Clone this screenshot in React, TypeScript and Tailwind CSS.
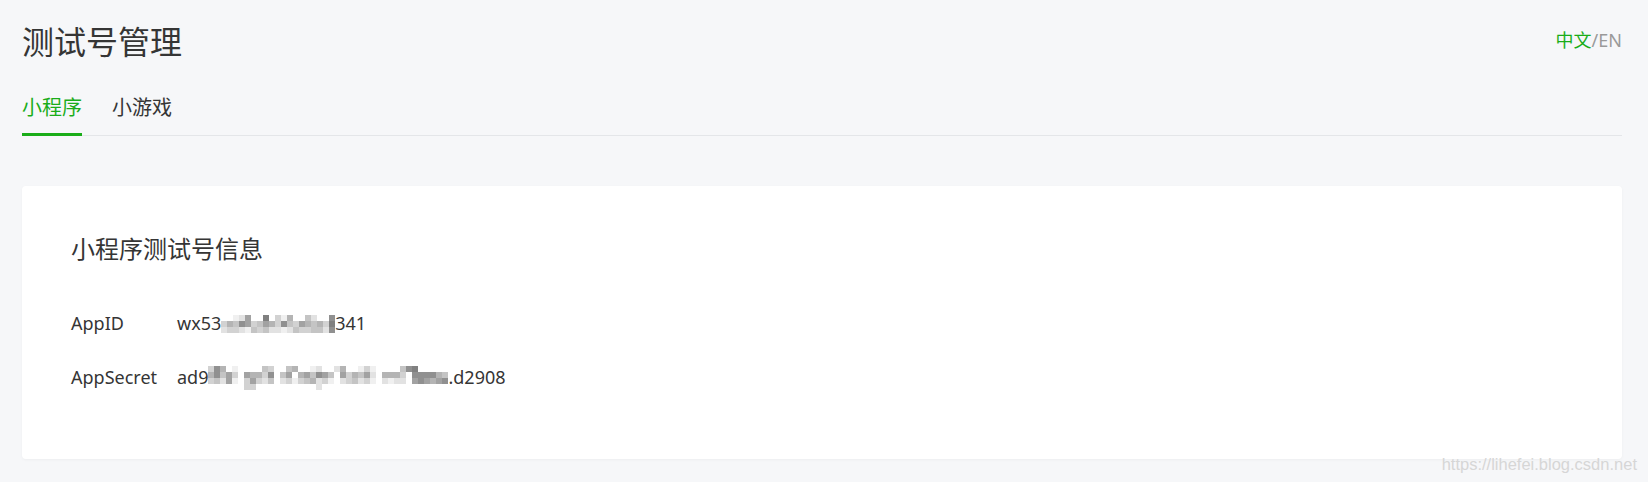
import React from "react";

const shades: Record<string, string> = {
  "1": "#f0f0f0",
  "2": "#e2e2e2",
  "3": "#d2d2d2",
  "4": "#c4c4c4",
  "5": "#b4b4b4",
  "6": "#a2a2a2",
  "7": "#909090",
  "8": "#808080",
  "9": "#707070",
};

// pixelated blur over the hidden part of the keys
function Mosaic({ rows }: { rows: string[] }) {
  return (
    <span className="inline-flex flex-col mt-[2px]">
      {rows.map((row, i) => (
        <span key={i} className="flex">
          {row.split("").map((c, j) => (
            <span
              key={j}
              className="block w-[6px] h-[6px]"
              style={{ backgroundColor: shades[c] ?? "transparent" }}
            />
          ))}
        </span>
      ))}
    </span>
  );
}

const appIdMosaic = [
  "0012600803150042007",
  "3547634653743654538",
  "2332143422124334427",
];

const secretMosaic = [
  "3750100004300450012002500131000047800000",
  "5746306553704605647640635462055530777754",
  "3426103632402313452310234231021220676567",
  "0000003300000000002000000000000000000000",
];

export default function App() {
  return (
    <div
      className="relative min-h-[482px] bg-[#f6f7f9] pt-5 pl-[22px] pr-[26px] text-[#353535]"
      style={{ fontFamily: '"Noto Sans", "Noto Sans CJK SC", sans-serif' }}
    >
      <div className="flex items-center justify-between">
        <h1 className="text-[32px] leading-[44px] font-normal">测试号管理</h1>
        <div className="text-[18px] leading-[24px] -mt-[4px]">
          <span className="text-[#1aad19]">中文</span>
          <span className="text-[#9a9a9a]">/EN</span>
        </div>
      </div>

      <div className="mt-[30px] flex border-b border-[#e4e6e9]">
        <div className="-mb-px border-b-[3px] border-[#1aad19] pb-[11px] text-[20px] leading-[28px] text-[#1aad19]">
          小程序
        </div>
        <div className="ml-[30px] pb-[11px] text-[20px] leading-[28px] text-[#353535]">
          小游戏
        </div>
      </div>

      <div className="mt-[50px] w-[1600px] rounded-[4px] bg-white px-[49px] pt-[45px] pb-[68px] shadow-[0_1px_3px_rgba(0,0,0,0.04)]">
        <h2 className="text-[24px] leading-[36px] font-normal">小程序测试号信息</h2>
        <div className="mt-[42px] flex flex-col gap-[26px] text-[18px] leading-[28px]">
          <div className="flex items-center">
            <span className="w-[106px]">AppID</span>
            <span className="flex items-center">
              wx53
              <Mosaic rows={appIdMosaic} />
              341
            </span>
          </div>
          <div className="flex items-center">
            <span className="w-[106px]">AppSecret</span>
            <span className="flex items-center">
              ad9
              <Mosaic rows={secretMosaic} />
              .d2908
            </span>
          </div>
        </div>
      </div>

      <div
        className="absolute right-[11px] top-[455px] text-[16.5px] leading-[18px] text-[#d6d6d6]"
        style={{ fontFamily: '"Liberation Sans", Arial, sans-serif' }}
      >
        https://lihefei.blog.csdn.net
      </div>
    </div>
  );
}
